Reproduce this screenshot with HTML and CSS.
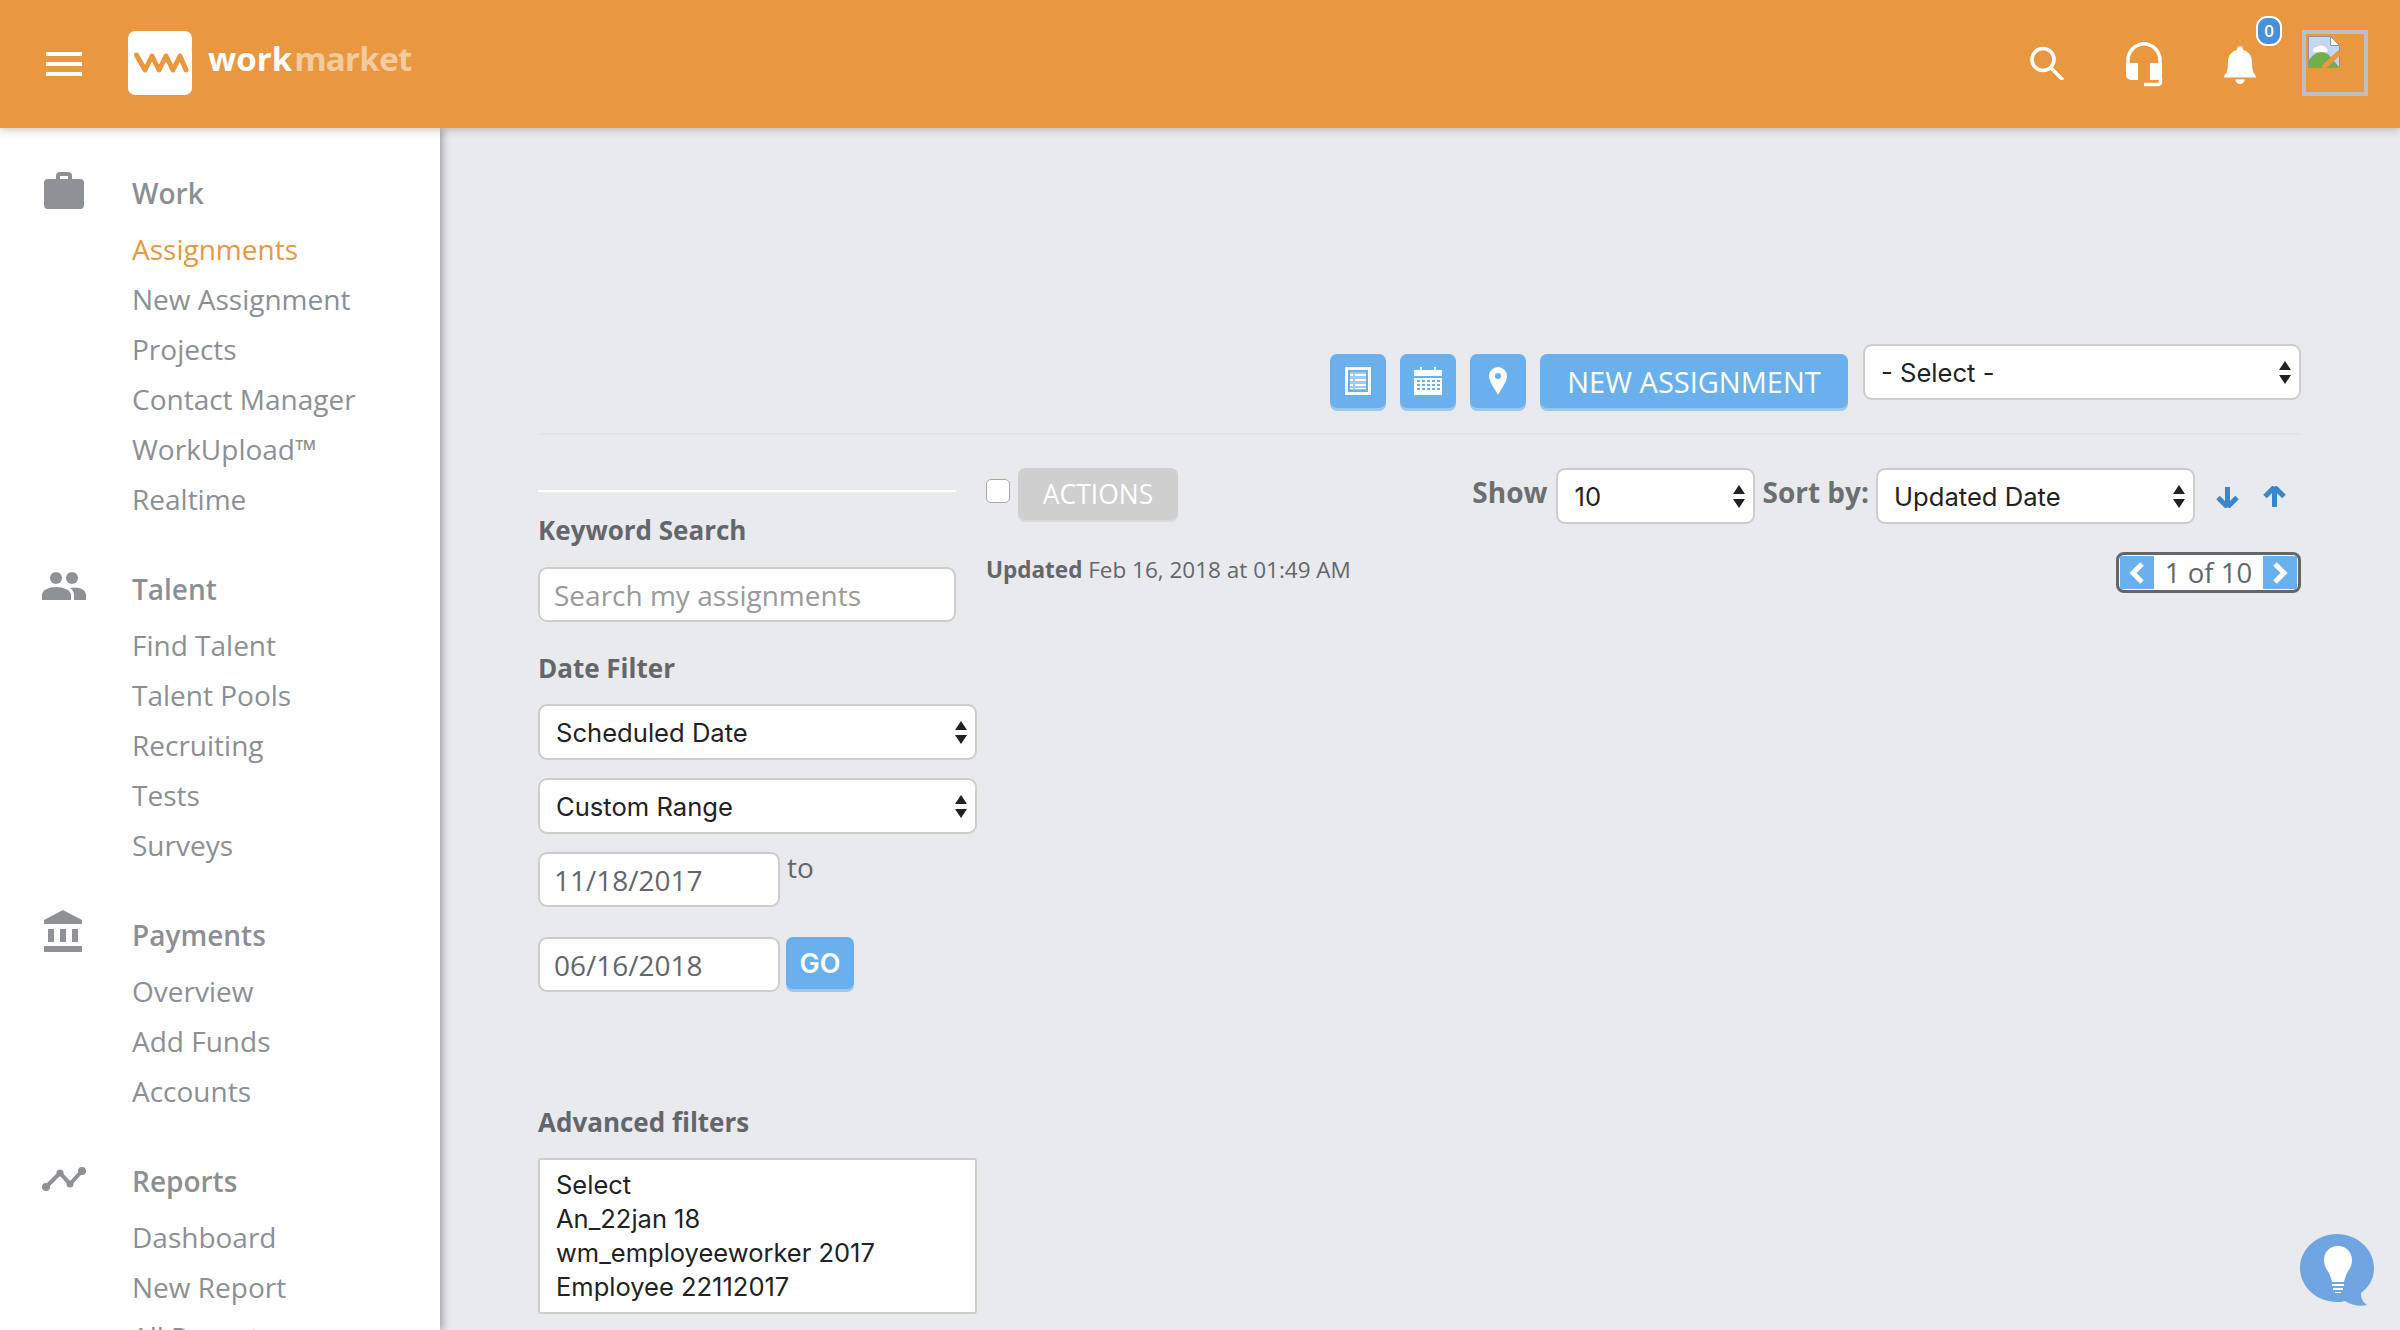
FILE: index.html
```html
<!DOCTYPE html>
<html lang="en">
<head>
<meta charset="utf-8">
<title>Work Market - Assignments</title>
<link rel="stylesheet" href="styles.css">
</head>
<body>
<div class="app">
  <header class="topbar">
    <button class="hamburger" aria-label="Menu"><span></span><span></span><span></span></button>
    <div class="logo-mark">
      <svg width="64" height="64" viewBox="0 0 64 64"><path d="M8.500 24L17 39l7-14 7 14 7-14 7 14 7-14 6 14" fill="none" stroke="#E99840" stroke-width="5" stroke-linejoin="round" stroke-linecap="round"/></svg>
    </div>
    <div class="logo-text">work<span class="logo-soft">market</span></div>
    <div class="top-actions">
      <svg class="top-icon" width="40" height="40" viewBox="0 0 40 40"><circle cx="19" cy="19.500" r="11" fill="none" stroke="#fff" stroke-width="3.500"/><path d="M27 28l12 12" stroke="#fff" stroke-width="3.500"/></svg>
      <svg class="top-icon" width="40" height="48" viewBox="0 0 40 48"><path d="M4 30V20a16 16 0 0 1 32 0v20" fill="none" stroke="#fff" stroke-width="3.500"/><path d="M2 23h12v17H7a5 5 0 0 1-5-5zM26 23h12v17H26z" fill="#fff"/><path d="M20 44.500h14a2.500 2.500 0 0 0 2.500-2.500v-4" fill="none" stroke="#fff" stroke-width="3.500"/></svg>
      <div class="bell-wrap">
        <svg width="32" height="39" viewBox="0 0 34 42"><path d="M17 1a3 3 0 0 1 3 3v1c7 2 10 7 10 14 0 8 1 10 4 14v2H0v-2c3-4 4-6 4-14 0-7 3-12 10-14V4a3 3 0 0 1 3-3zM12 37h10a5 5 0 0 1-10 0z" fill="#fff"/></svg>
        <span class="badge">0</span>
      </div>
      <div class="avatar">
        <svg width="32" height="32" viewBox="0 0 32 32"><path d="M.5.5h22l9 9v22H.5z" fill="#C5D6F0" stroke="#8D949E"/><path d="M22.500.5v9h9z" fill="#fff" stroke="#8D949E"/><path d="M5 15a4 4 0 0 1 4-4 6 6 0 0 1 9 1 3 3 0 0 1 1 4H6z" fill="#fff"/><path d="M1 31v-7c5-8 14-10 20-5l10 12z" fill="#74AE4A"/><path d="M15 32L32 16" stroke="#E99840" stroke-width="5"/></svg>
      </div>
    </div>
  </header>

  <aside class="sidebar">
    <section class="nav-group">
      <div class="nav-head">
        <span class="nav-icon"><svg width="40" height="38" viewBox="0 0 40 38"><path d="M12 8V5a4 4 0 0 1 4-4h8a4 4 0 0 1 4 4v3h8a4 4 0 0 1 4 4v22a4 4 0 0 1-4 4H4a4 4 0 0 1-4-4V12a4 4 0 0 1 4-4zm4 0h8V5h-8z" fill="#8E9195"/></svg></span>
        <span class="nav-title">Work</span>
      </div>
      <a class="nav-link active">Assignments</a>
      <a class="nav-link">New Assignment</a>
      <a class="nav-link">Projects</a>
      <a class="nav-link">Contact Manager</a>
      <a class="nav-link">WorkUpload™</a>
      <a class="nav-link">Realtime</a>
    </section>
    <section class="nav-group">
      <div class="nav-head">
        <span class="nav-icon"><svg width="44" height="28" viewBox="0 0 44 28"><circle cx="14" cy="6" r="6" fill="#8E9195"/><circle cx="30" cy="6" r="6" fill="#8E9195"/><path d="M0 28v-5c0-5 7-8 14-8s15 3 15 8v5z" fill="#8E9195"/><path d="M32 28v-5c0-3-1-5-4-7 8-2 16 1 16 7v5z" fill="#8E9195"/></svg></span>
        <span class="nav-title">Talent</span>
      </div>
      <a class="nav-link">Find Talent</a>
      <a class="nav-link">Talent Pools</a>
      <a class="nav-link">Recruiting</a>
      <a class="nav-link">Tests</a>
      <a class="nav-link">Surveys</a>
    </section>
    <section class="nav-group">
      <div class="nav-head">
        <span class="nav-icon icon-bank"><svg width="38" height="42" viewBox="0 0 38 42"><path d="M19 0l19 10v4H0v-4zM4 19h6v13H4zM16 19h6v13h-6zM28 19h6v13h-6zM0 36h38v6H0z" fill="#8E9195"/></svg></span>
        <span class="nav-title">Payments</span>
      </div>
      <a class="nav-link">Overview</a>
      <a class="nav-link">Add Funds</a>
      <a class="nav-link">Accounts</a>
    </section>
    <section class="nav-group">
      <div class="nav-head">
        <span class="nav-icon icon-chart"><svg width="44" height="24" viewBox="0 0 44 24"><path d="M4 20L18 6l10 11L40 4" fill="none" stroke="#8E9195" stroke-width="4"/><circle cx="4" cy="20" r="4" fill="#8E9195"/><circle cx="18" cy="6" r="3.500" fill="#8E9195"/><circle cx="28" cy="17" r="3.500" fill="#8E9195"/><circle cx="40" cy="4" r="4" fill="#8E9195"/></svg></span>
        <span class="nav-title">Reports</span>
      </div>
      <a class="nav-link">Dashboard</a>
      <a class="nav-link">New Report</a>
      <a class="nav-link">All Reports</a>
    </section>
  </aside>

  <main class="main">
    <div class="toolbar">
      <button class="btn icon-btn" aria-label="List view"><svg width="26" height="28" viewBox="0 0 26 28"><path d="M0 0h26v28H0zM3 3v22h20V3z" fill="#fff" fill-rule="evenodd"/><path d="M5 5h16v18H5z" fill="#fff" opacity=".35"/><path d="M5 7h3v2H5zM10 7h11v2H10zM5 12h3v2H5zM10 12h11v2H10zM5 17h3v2H5zM10 17h11v2H10zM5 21h3v1H5zM10 21h11v1H10z" fill="#fff"/></svg></button>
      <button class="btn icon-btn" aria-label="Calendar view"><svg width="28" height="28" viewBox="0 0 28 28"><path d="M0 3h6V0h2v3h12V0h2v3h6v6H0zM0 11h28v17H0z" fill="#fff"/><path d="M3 13h3v2H3zM8 13h3v2H8zM13 13h3v2h-3zM18 13h3v2h-3zM23 13h3v2h-3zM3 17h3v2H3zM8 17h3v2H8zM13 17h3v2h-3zM18 17h3v2h-3zM23 17h3v2h-3zM3 21h3v2H3zM8 21h3v2H8zM13 21h3v2h-3zM18 21h3v2h-3zM23 21h3v2h-3z" fill="#6AB0EC"/></svg></button>
      <button class="btn icon-btn" aria-label="Map view"><svg width="18" height="28" viewBox="0 0 18 28"><path d="M9 0a9 9 0 0 1 9 9c0 6-6 13-9 19C6 22 0 15 0 9a9 9 0 0 1 9-9zm0 6a3 3 0 1 0 0 6 3 3 0 0 0 0-6z" fill="#fff" fill-rule="evenodd"/></svg></button>
      <button class="btn new-btn">NEW ASSIGNMENT</button>
      <div class="select-box top-select">
        <select><option>- Select -</option></select>
        <svg class="arrows" width="12" height="23" viewBox="0 0 12 23"><path d="M6 0l6 9H0zM6 23L0 14h12z" fill="#222"/></svg>
      </div>
    </div>

    <div class="content">
      <div class="filters">
        <div class="filter-rule"></div>
        <label class="label label-keyword">Keyword Search</label>
        <input class="field field-search" placeholder="Search my assignments">
        <label class="label label-date">Date Filter</label>
        <div class="select-box filter-select">
          <select><option>Scheduled Date</option></select>
          <svg class="arrows" width="12" height="23" viewBox="0 0 12 23"><path d="M6 0l6 9H0zM6 23L0 14h12z" fill="#222"/></svg>
        </div>
        <div class="select-box filter-select range-select">
          <select><option>Custom Range</option></select>
          <svg class="arrows" width="12" height="23" viewBox="0 0 12 23"><path d="M6 0l6 9H0zM6 23L0 14h12z" fill="#222"/></svg>
        </div>
        <div class="date-row first-date">
          <input class="field field-date" value="11/18/2017">
          <span class="to">to</span>
        </div>
        <div class="date-row second-date">
          <input class="field field-date" value="06/16/2018">
          <button class="btn go-btn">GO</button>
        </div>
        <label class="label label-advanced">Advanced filters</label>
        <div class="listbox">
          <div>Select</div>
          <div>An_22jan 18</div>
          <div>wm_employeeworker 2017</div>
          <div>Employee 22112017</div>
        </div>
      </div>

      <div class="results">
        <div class="results-bar">
          <input type="checkbox" class="check">
          <button class="btn actions-btn">ACTIONS</button>
          <span class="bar-label show-label">Show</span>
          <div class="select-box show-select">
            <select><option>10</option></select>
            <svg class="arrows" width="12" height="23" viewBox="0 0 12 23"><path d="M6 0l6 9H0zM6 23L0 14h12z" fill="#222"/></svg>
          </div>
          <span class="bar-label sort-label">Sort by:</span>
          <div class="select-box sort-select">
            <select><option>Updated Date</option></select>
            <svg class="arrows" width="12" height="23" viewBox="0 0 12 23"><path d="M6 0l6 9H0zM6 23L0 14h12z" fill="#222"/></svg>
          </div>
          <svg class="sort-arrow down" width="23" height="22" viewBox="0 0 23 22"><path d="M11.500 21L2 11.500M11.500 21l9.500-9.500M11.500 21V1" fill="none" stroke="#3A86CC" stroke-width="5"/></svg>
          <svg class="sort-arrow up" width="23" height="22" viewBox="0 0 23 22"><path d="M11.500 1L2 10.500M11.500 1L21 10.500M11.500 1v20" fill="none" stroke="#3A86CC" stroke-width="5"/></svg>
        </div>
        <div class="status-row">
          <div class="updated"><strong>Updated</strong> Feb 16, 2018 at 01:49 AM</div>
          <div class="pager">
            <span class="pager-btn"><svg width="16" height="24" viewBox="0 0 16 24"><path d="M13 3L4 12l9 9" fill="none" stroke="#fff" stroke-width="5"/></svg></span>
            <span class="pager-text">1 of 10</span>
            <span class="pager-btn"><svg width="16" height="24" viewBox="0 0 16 24"><path d="M3 3l9 9-9 9" fill="none" stroke="#fff" stroke-width="5"/></svg></span>
          </div>
        </div>
      </div>
    </div>
  </main>

  <svg class="help-bubble" width="74" height="76" viewBox="0 0 74 76"><path d="M37 0c20 0 37 15 37 34 0 10-4 18-13 25 0 6 2 9 6 12-7 2-16 0-22-4-3 1-5 1-8 1C17 68 0 53 0 34S17 0 37 0z" fill="#6FA5E0"/><path d="M38 12c8 0 14 6 14 14 0 9-6 11-8 22H32c-2-11-8-13-8-22 0-8 6-14 14-14z" fill="#fff"/><path d="M32 50h12v2H32zM33 54h10v2H33zM35 58h6v1h-6z" fill="#fff"/></svg>
</div>
</body>
</html>
```
FILE: styles.css
```css
* { box-sizing: border-box; }
html, body { margin: 0; height: 100%; overflow: hidden; }
body { font-family: "Open Sans", sans-serif; background: #E9EAEE; color: #63666A; }
.app { display: grid; grid-template-columns: 440px 1fr; grid-template-rows: 128px 1202px; height: 1330px; position: relative; overflow: hidden; }

.topbar { grid-column: 1 / 3; background: #E99840; display: flex; align-items: flex-start; position: relative; z-index: 2; box-shadow: 0 2px 8px rgba(90,70,40,.3); }
.hamburger { background: none; border: 0; padding: 0; margin: 52px 0 0 46px; width: 36px; height: 24px; display: flex; flex-direction: column; justify-content: space-between; }
.hamburger span { display: block; height: 4px; background: #fff; }
.logo-mark { width: 64px; height: 64px; margin: 31px 0 0 46px; background: #fff; border-radius: 7px; }
.logo-mark svg { display: block; }
.logo-text { margin: 35px 0 0 16px; font-size: 33px; line-height: 48px; font-weight: 700; color: #fff; }
.logo-soft { color: rgba(255,255,255,.5); margin-left: 2px; letter-spacing: -.7px; }
.top-actions { margin-left: auto; display: flex; align-items: flex-start; }
.top-icon { display: block; }
.top-icon:nth-child(1) { margin: 40px 0 0 0; }
.top-icon:nth-child(2) { margin: 40px 0 0 60px; }
.bell-wrap { position: relative; margin: 45px 0 0 60px; width: 34px; height: 42px; }
.bell-wrap svg { display: block; }
.badge { position: absolute; left: 32px; top: -29px; width: 26px; height: 30px; background: #4A90D9; border: 2px solid #fff; border-radius: 11px; color: #fff; font-size: 17px; line-height: 25px; font-weight: 600; text-align: center; }
.avatar { width: 66px; height: 66px; margin: 30px 32px 0 44px; border: 4px solid #BDBFC0; padding: 2px; }
.avatar svg { display: block; }

.sidebar { background: #fff; box-shadow: 3px 0 7px rgba(60,60,70,.4); padding-top: 40px; position: relative; z-index: 1; overflow: hidden; }
.nav-group { margin-bottom: 40px; }
.nav-head { display: flex; align-items: center; height: 50px; margin-bottom: 6px; position: relative; }
.nav-icon { width: 132px; padding-left: 44px; display: flex; margin-top: -6px; }
.nav-group:nth-child(2) .nav-icon { padding-left: 42px; }
.icon-bank { margin-top: -8px; }
.nav-group:last-child .icon-chart { padding-left: 42px; margin-top: -4px; }
.nav-title { font-size: 28px; font-weight: 600; color: #8C9094; line-height: 50px; }
.nav-link { display: block; height: 50px; line-height: 50px; padding-left: 132px; font-size: 28px; color: #8C9094; }
.nav-link.active { color: #E99840; }

.main { padding: 0 99px 0 98px; min-width: 0; }
.toolbar { display: flex; align-items: flex-start; justify-content: flex-end; padding-top: 216px; height: 307px; border-bottom: 2px solid #E3E4E7; }
.btn { border: 0; border-radius: 7px; background: #6AB0EC; color: #fff; font-family: "Open Sans", sans-serif; box-shadow: 0 3px 0 #9CC8EE; padding: 0; display: flex; align-items: center; justify-content: center; }
.icon-btn { width: 56px; height: 54px; margin: 10px 14px 0 0; }
.new-btn { width: 308px; height: 54px; margin: 10px 15px 0 0; font-size: 29px; font-weight: 500; }

.select-box { position: relative; background: #fff; border: 2px solid #CDCDCD; border-radius: 9px; height: 56px; }
.select-box select { appearance: none; -webkit-appearance: none; background: none; border: 0; outline: 0; width: 100%; height: 100%; font-family: Inter, sans-serif; font-size: 25.600px; color: #222; padding: 0 30px 0 16px; display: block; }
.arrows { position: absolute; right: 8px; top: 15px; }
.top-select { width: 438px; }

.content { display: flex; }
.filters { width: 439px; padding-top: 55px; flex: none; }
.filter-rule { width: 418px; height: 2px; background: #fff; }
.label { display: block; font-size: 26px; line-height: 30px; font-weight: 700; color: #63666A; }
.label-keyword { margin-top: 23px; }
.label-date { margin-top: 31px; }
.label-advanced { margin-top: 115px; }
.field { display: block; background: #fff; border: 2px solid #CDCDCD; border-radius: 9px; height: 55px; font-family: "Open Sans", sans-serif; font-size: 28px; color: #63666A; padding: 0 14px; outline: 0; }
.field::placeholder { color: #9A9A9A; opacity: 1; }
.field-search { width: 418px; margin-top: 22px; }
.field-date { width: 242px; flex: none; }
.filter-select { margin-top: 21px; }
.range-select { margin-top: 18px; }
.date-row { display: flex; align-items: flex-start; }
.first-date { margin-top: 18px; }
.second-date { margin-top: 30px; }
.to { font-size: 28px; line-height: 30px; margin-left: 7px; color: #63666A; }
.go-btn { width: 68px; height: 52px; margin: 0 0 0 6px; font-family: Inter, sans-serif; font-size: 27px; font-weight: 600; }
.listbox { margin-top: 21px; height: 156px; background: #fff; border: 2px solid #CDCDCD; border-radius: 3px; padding: 8px 16px; font-family: Inter, sans-serif; font-size: 25.500px; line-height: 34px; color: #222; }

.results { flex: 1; margin-left: 9px; padding-top: 33px; min-width: 0; }
.results-bar { display: flex; align-items: flex-start; height: 55px; }
.check { appearance: none; -webkit-appearance: none; width: 24px; height: 24px; margin: 11px 0 0 0; background: #fff; border: 1.500px solid #A9A9A9; border-radius: 5px; }
.actions-btn { width: 160px; height: 52px; margin-left: 8px; background: #CFCFCF; box-shadow: 0 2px 0 #DADADA; font-size: 26.500px; }
.bar-label { font-size: 28px; line-height: 48px; font-weight: 700; color: #6D6E70; }
.show-label { margin-left: auto; }
.show-select { width: 199px; margin-left: 9px; }
.sort-label { margin-left: 7px; }
.sort-select { width: 319px; margin-left: 7px; }
.sort-arrow { margin-top: 18px; }
.sort-arrow.down { margin-left: 21px; }
.sort-arrow.up { margin-left: 24px; margin-right: 15px; }

.status-row { display: flex; justify-content: space-between; align-items: center; margin-top: 29px; height: 41px; }
.updated { font-size: 22.500px; color: #63666A; margin-top: -6px; }
.updated strong { font-weight: 700; }
.pager { width: 185px; height: 41px; background: #fff; border: 3px solid #63666A; border-radius: 8px; padding: 1px; display: flex; justify-content: space-between; align-items: stretch; }
.pager-btn { width: 34px; background: #6AB0EC; display: flex; align-items: center; justify-content: center; }
.pager-text { font-size: 27.500px; line-height: 34px; color: #63666A; white-space: nowrap; }

.help-bubble { position: absolute; left: 2300px; top: 1234px; z-index: 3; }
```
